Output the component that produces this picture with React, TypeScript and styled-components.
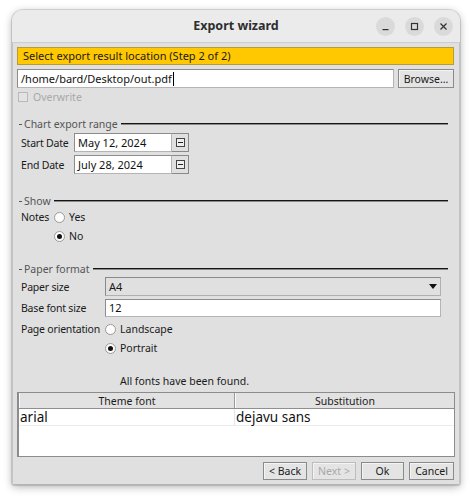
import React from "react";
import styled, { createGlobalStyle } from "styled-components";

const Global = createGlobalStyle`
  html, body { margin: 0; padding: 0; background: #ffffff; }
  body { font-family: "Noto Sans", "Open Sans", sans-serif; font-size: 10.5px; line-height: 14px; color: #1a1a1a; }
  * { box-sizing: border-box; }
`;

const Page = styled.div`
  padding: 10px 0 0 12px;
  width: 470px;
  height: 500px;
`;

const Window = styled.div`
  width: 448px;
  height: 475px;
  border-radius: 11px 11px 2px 2px;
  box-shadow: 0 0 0 1px rgba(0, 0, 0, 0.12), 0 2px 8px rgba(0, 0, 0, 0.3);
  display: flex;
  flex-direction: column;
  overflow: hidden;
  background: #e0e0e0;
`;

const TitleBar = styled.div`
  height: 33px;
  flex: none;
  background: #ebebeb;
  border-bottom: 1px solid #cdcdcd;
  position: relative;
  display: flex;
  align-items: center;
  justify-content: center;
`;

const Title = styled.div`
  font-weight: 700;
  font-size: 12.5px;
  color: #2e2e2e;
`;

const WinButtons = styled.div`
  position: absolute;
  right: 7px;
  top: 7px;
  display: flex;
  gap: 10px;
`;

const WinButton = styled.div`
  width: 19px;
  height: 19px;
  border-radius: 50%;
  background: #dadada;
  display: flex;
  align-items: center;
  justify-content: center;
`;

const Body = styled.div`
  flex: 1;
  display: flex;
  flex-direction: column;
  padding: 4px 5px 0 4px;
  border-left: 1px solid #c4c4c4;
  border-right: 1px solid #c4c4c4;
  border-bottom: 1px solid #b5b5b5;
`;

const Banner = styled.div`
  height: 18px;
  flex: none;
  background: #ffc800;
  border: 1px solid #b89a3a;
  display: flex;
  align-items: center;
  padding-left: 5px;
  font-size: 11px;
  color: #1a1a1a;
`;

const PathRow = styled.div`
  display: flex;
  gap: 4px;
  margin-top: 4px;
  height: 19px;
  flex: none;
`;

const TextField = styled.div<{ $w?: number }>`
  ${(p) => (p.$w ? `width: ${p.$w}px; flex: none;` : "flex: 1;")}
  height: 100%;
  background: #ffffff;
  border: 1px solid #8c8c8c;
  border-right-color: #b4b4b4;
  border-bottom-color: #b4b4b4;
  display: flex;
  align-items: center;
  padding-left: 3px;
  font-size: 11px;
  color: #111;
  white-space: nowrap;
`;

const Caret = styled.span`
  display: inline-block;
  width: 1px;
  height: 14px;
  background: #000;
  margin-left: 1px;
`;

const Button = styled.div<{ $w: number; $h?: number; $disabled?: boolean }>`
  width: ${(p) => p.$w}px;
  height: ${(p) => p.$h ?? 18}px;
  flex: none;
  border: 1px solid ${(p) => (p.$disabled ? "#bdbdbd" : "#8a8a8a")};
  box-shadow: inset 1px 1px 0 #f4f4f4;
  background: #e4e4e4;
  display: flex;
  align-items: center;
  justify-content: center;
  font-size: 10.5px;
  white-space: nowrap;
  color: ${(p) => (p.$disabled ? "#a8a8a8" : "#1a1a1a")};
`;

const CheckRow = styled.div`
  display: flex;
  align-items: center;
  gap: 5px;
  margin: 2px 0 0 1px;
  height: 14px;
  flex: none;
  color: #a9a9a9;
`;

const CheckBox = styled.div`
  width: 10px;
  height: 10px;
  border: 1px solid #b9b9b9;
  background: #e3e3e3;
`;

const SectionTitle = styled.div<{ $mt: number }>`
  display: flex;
  align-items: center;
  margin: ${(p) => p.$mt}px 6px 0 2px;
  height: 14px;
  flex: none;
  color: #555;
  white-space: nowrap;
`;

const Dash = styled.span`
  width: 3px;
  height: 1px;
  background: #555;
  margin-right: 2px;
`;

const Line = styled.span`
  flex: 1;
  height: 2px;
  background: linear-gradient(#151515 50%, #8a8a8a 50%);
  margin-left: 3px;
`;

const FormRow = styled.div<{ $mt: number; $h?: number }>`
  display: flex;
  align-items: center;
  margin: ${(p) => p.$mt}px 13px 0 4px;
  height: ${(p) => p.$h ?? 19}px;
  flex: none;
`;

const Label = styled.div<{ $w: number }>`
  width: ${(p) => p.$w}px;
  flex: none;
  color: #1a1a1a;
  white-space: nowrap;
  letter-spacing: -0.2px;
  height: 14px;
`;

const DateButton = styled.div`
  width: 17px;
  height: 19px;
  border: 1px solid #8a8a8a;
  border-left: none;
  background: #e0e0e0;
  display: flex;
  align-items: center;
  justify-content: center;
`;

const MiniBox = styled.div`
  width: 9px;
  height: 9px;
  border: 1px solid #444;
  background: #eee;
  display: flex;
  align-items: center;
  justify-content: center;
  &::after {
    content: "";
    width: 5px;
    height: 1px;
    background: #222;
  }
`;

const RadioItem = styled.div`
  display: flex;
  align-items: center;
  gap: 4px;
  height: 14px;
  white-space: nowrap;
`;

const RadioCircle = styled.div<{ $on?: boolean }>`
  width: 11px;
  height: 11px;
  border-radius: 50%;
  border: 1px solid #9a9a9a;
  background: #fdfdfd;
  display: flex;
  align-items: center;
  justify-content: center;
  &::after {
    content: "";
    width: 5px;
    height: 5px;
    border-radius: 50%;
    background: ${(p) => (p.$on ? "#111" : "transparent")};
  }
`;

const RadioStack = styled.div`
  display: flex;
  flex-direction: column;
  gap: 5px;
`;

const RadioBlock = styled.div<{ $mt: number }>`
  display: flex;
  flex: none;
  margin: ${(p) => p.$mt}px 0 0 4px;
`;

const Combo = styled.div`
  flex: 1;
  height: 19px;
  background: #e0e0e0;
  border: 1px solid #8a8a8a;
  border-right-color: #b0b0b0;
  border-bottom-color: #b0b0b0;
  display: flex;
  align-items: center;
  justify-content: space-between;
  padding: 0 3px 0 3px;
  font-size: 11px;
`;

const Info = styled.div`
  margin: 19px 0 0 103px;
  height: 14px;
  flex: none;
`;

const Table = styled.div`
  margin-top: 4px;
  height: 65px;
  flex: none;
  border: 1px solid #8c8c8c;
  border-left-width: 2px;
  background: #ffffff;
  display: flex;
  flex-direction: column;
  width: 438px;
`;

const HeaderRow = styled.div`
  display: grid;
  grid-template-columns: 216px 1fr;
  height: 16px;
  flex: none;
  background: #e2e2e2;
  border-bottom: 1px solid #8f8f8f;
`;

const HeaderCell = styled.div<{ $last?: boolean }>`
  display: flex;
  align-items: center;
  justify-content: center;
  border-right: ${(p) => (p.$last ? "none" : "1px solid #9a9a9a")};
  border-left: 1px solid #fafafa;
`;

const DataRow = styled.div`
  display: grid;
  grid-template-columns: 216px 1fr;
  height: 17px;
  flex: none;
  border-bottom: 1px solid #ececec;
`;

const DataCell = styled.div<{ $last?: boolean }>`
  display: flex;
  align-items: center;
  padding-left: 1px;
  font-size: 13.5px;
  line-height: 16px;
  color: #111;
  border-right: ${(p) => (p.$last ? "none" : "1px solid #e6e6e6")};
`;

const Footer = styled.div`
  display: flex;
  justify-content: flex-end;
  gap: 5px;
  margin-top: 5px;
  flex: none;
`;

export default function App() {
  return (
    <>
      <Global />
      <Page>
        <Window>
          <TitleBar>
            <Title>Export wizard</Title>
            <WinButtons>
              <WinButton>
                <svg width="9" height="9" viewBox="0 0 9 9">
                  <rect x="1.5" y="7" width="6" height="1.2" fill="#333" />
                </svg>
              </WinButton>
              <WinButton>
                <svg width="9" height="9" viewBox="0 0 9 9">
                  <rect x="1.5" y="1.5" width="6" height="6" fill="none" stroke="#333" strokeWidth="1.2" />
                </svg>
              </WinButton>
              <WinButton>
                <svg width="9" height="9" viewBox="0 0 9 9">
                  <path d="M1.5 1.5 L7.5 7.5 M7.5 1.5 L1.5 7.5" stroke="#333" strokeWidth="1.2" />
                </svg>
              </WinButton>
            </WinButtons>
          </TitleBar>
          <Body>
            <Banner>Select export result location (Step 2 of 2)</Banner>
            <PathRow>
              <TextField>
                /home/bard/Desktop/out.pdf<Caret />
              </TextField>
              <Button $w={56} $h={19}>Browse...</Button>
            </PathRow>
            <CheckRow>
              <CheckBox />
              Overwrite
            </CheckRow>

            <SectionTitle $mt={13}>
              <Dash />
              Chart export range
              <Line />
            </SectionTitle>
            <FormRow $mt={2}>
              <Label $w={53}>Start Date</Label>
              <TextField $w={98}>May 12, 2024</TextField>
              <DateButton>
                <MiniBox />
              </DateButton>
            </FormRow>
            <FormRow $mt={3}>
              <Label $w={53}>End Date</Label>
              <TextField $w={98}>July 28, 2024</TextField>
              <DateButton>
                <MiniBox />
              </DateButton>
            </FormRow>

            <SectionTitle $mt={20}>
              <Dash />
              Show
              <Line />
            </SectionTitle>
            <RadioBlock $mt={2}>
              <Label $w={33}>Notes</Label>
              <RadioStack>
                <RadioItem>
                  <RadioCircle />
                  Yes
                </RadioItem>
                <RadioItem>
                  <RadioCircle $on />
                  No
                </RadioItem>
              </RadioStack>
            </RadioBlock>

            <SectionTitle $mt={19}>
              <Dash />
              Paper format
              <Line />
            </SectionTitle>
            <FormRow $mt={1}>
              <Label $w={84}>Paper size</Label>
              <Combo>
                A4
                <svg width="8" height="5" viewBox="0 0 8 5">
                  <path d="M0 0 H8 L4 5 Z" fill="#111" />
                </svg>
              </Combo>
            </FormRow>
            <FormRow $mt={3} $h={18}>
              <Label $w={84}>Base font size</Label>
              <TextField>12</TextField>
            </FormRow>
            <RadioBlock $mt={5}>
              <Label $w={84}>Page orientation</Label>
              <RadioStack>
                <RadioItem>
                  <RadioCircle />
                  Landscape
                </RadioItem>
                <RadioItem>
                  <RadioCircle $on />
                  Portrait
                </RadioItem>
              </RadioStack>
            </RadioBlock>

            <Info>All fonts have been found.</Info>

            <Table>
              <HeaderRow>
                <HeaderCell>Theme font</HeaderCell>
                <HeaderCell $last>Substitution</HeaderCell>
              </HeaderRow>
              <DataRow>
                <DataCell>arial</DataCell>
                <DataCell $last>dejavu sans</DataCell>
              </DataRow>
            </Table>

            <Footer>
              <Button $w={44}>&lt; Back</Button>
              <Button $w={44} $disabled>Next &gt;</Button>
              <Button $w={43}>Ok</Button>
              <Button $w={45}>Cancel</Button>
            </Footer>
          </Body>
        </Window>
      </Page>
    </>
  );
}
